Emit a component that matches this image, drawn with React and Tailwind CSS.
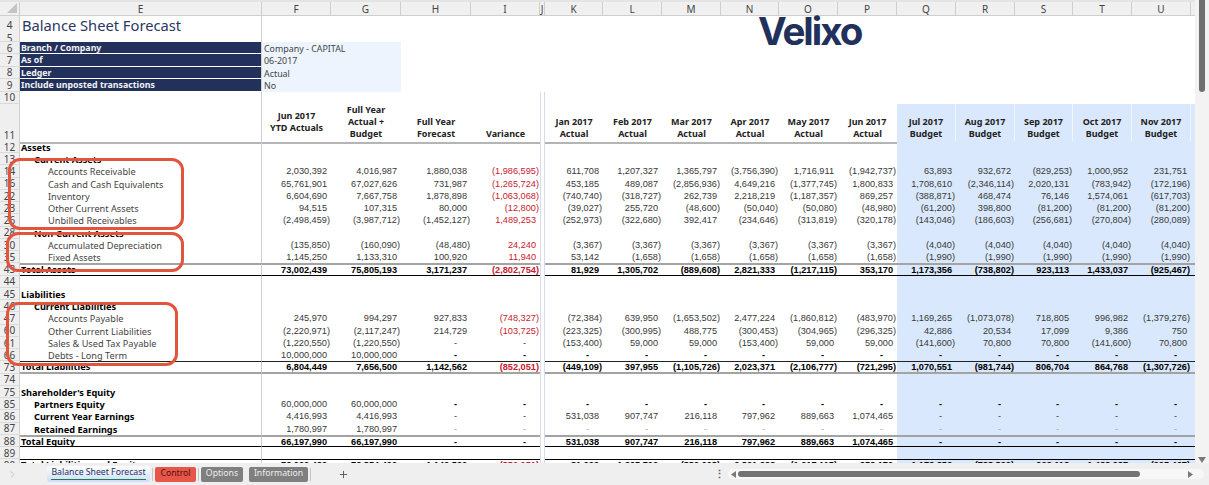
import React from 'react';
import { ChevronRight, Plus } from 'lucide-react';

const GRID =
  'grid grid-cols-[20px_242px_69px_70px_70px_69px_5px_58px_59px_59px_58px_59px_59px_59px_59px_58px_59px_59px_4px]';
const LABEL_FONT = "font-['Noto_Sans',sans-serif]";
const NUM_FONT = "font-['Liberation_Sans',sans-serif]";

const LETTERS = ['F', 'G', 'H', 'I', 'J', 'K', 'L', 'M', 'N', 'O', 'P', 'Q', 'R', 'S', 'T', 'U'];

const dashes = (n) => Array(n).fill('-');

const rows = [
  { n: 12, label: 'Assets', bold: true },
  { n: 13, label: 'Current Assets', bold: true, level: 1 },
  { n: 14, label: 'Accounts Receivable', level: 2, v: ['2,030,392', '4,016,987', '1,880,038', '(1,986,595)', '611,708', '1,207,327', '1,365,797', '(3,756,390)', '1,716,911', '(1,942,737)', '63,893', '932,672', '(829,253)', '1,000,952', '231,751'] },
  { n: 16, label: 'Cash and Cash Equivalents', level: 2, v: ['65,761,901', '67,027,626', '731,987', '(1,265,724)', '453,185', '489,087', '(2,856,936)', '4,649,216', '(1,377,745)', '1,800,833', '1,708,610', '(2,346,114)', '2,020,131', '(783,942)', '(172,196)'] },
  { n: 22, label: 'Inventory', level: 2, v: ['6,604,690', '7,667,758', '1,878,898', '(1,063,068)', '(740,740)', '(318,727)', '262,739', '2,218,219', '(1,187,357)', '869,257', '(388,871)', '468,474', '76,146', '1,574,061', '(617,703)'] },
  { n: 23, label: 'Other Current Assets', level: 2, v: ['94,515', '107,315', '80,000', '(12,800)', '(39,027)', '255,720', '(48,600)', '(50,040)', '(50,080)', '(48,980)', '(61,200)', '398,800', '(81,200)', '(81,200)', '(81,200)'] },
  { n: 26, label: 'Unbilled Receivables', level: 2, v: ['(2,498,459)', '(3,987,712)', '(1,452,127)', '1,489,253', '(252,973)', '(322,680)', '392,417', '(234,646)', '(313,819)', '(320,178)', '(143,046)', '(186,603)', '(256,681)', '(270,804)', '(280,089)'] },
  { n: 28, label: 'Non-Current Assets', bold: true, level: 1 },
  { n: 30, label: 'Accumulated Depreciation', level: 2, v: ['(135,850)', '(160,090)', '(48,480)', '24,240', ...Array(6).fill('(3,367)'), ...Array(5).fill('(4,040)')] },
  { n: 35, label: 'Fixed Assets', level: 2, v: ['1,145,250', '1,133,310', '100,920', '11,940', '53,142', ...Array(5).fill('(1,658)'), ...Array(5).fill('(1,990)')] },
  { n: 43, label: 'Total Assets', bold: true, boldNums: true, line: 'grayblack', v: ['73,002,439', '75,805,193', '3,171,237', '(2,802,754)', '81,929', '1,305,702', '(889,608)', '2,821,333', '(1,217,115)', '353,170', '1,173,356', '(738,802)', '923,113', '1,433,037', '(925,467)'] },
  { n: 44 },
  { n: 45, label: 'Liabilities', bold: true },
  { n: 46, label: 'Current Liabilities', bold: true, level: 1 },
  { n: 47, label: 'Accounts Payable', level: 2, v: ['245,970', '994,297', '927,833', '(748,327)', '(72,384)', '639,950', '(1,653,502)', '2,477,224', '(1,860,812)', '(483,970)', '1,169,265', '(1,073,078)', '718,805', '996,982', '(1,379,276)'] },
  { n: 60, label: 'Other Current Liabilities', level: 2, v: ['(2,220,971)', '(2,117,247)', '214,729', '(103,725)', '(223,325)', '(300,995)', '488,775', '(300,453)', '(304,965)', '(296,325)', '42,886', '20,534', '17,099', '9,386', '750'] },
  { n: 61, label: 'Sales & Used Tax Payable', level: 2, v: ['(1,220,550)', '(1,220,550)', '-', '-', '(153,400)', '59,000', '59,000', '(153,400)', '59,000', '59,000', '(141,600)', '70,800', '70,800', '(141,600)', '70,800'] },
  { n: 66, label: 'Debts - Long Term', level: 2, dash: 'text-black font-bold', v: ['10,000,000', '10,000,000', ...dashes(13)] },
  { n: 73, label: 'Total Liabilities', bold: true, boldNums: true, line: 'blackgray', v: ['6,804,449', '7,656,500', '1,142,562', '(852,051)', '(449,109)', '397,955', '(1,105,726)', '2,023,371', '(2,106,777)', '(721,295)', '1,070,551', '(981,744)', '806,704', '864,768', '(1,307,726)'] },
  { n: 74 },
  { n: 75, label: "Shareholder's Equity", bold: true },
  { n: 85, label: 'Partners Equity', bold: true, level: 1, dash: 'text-black font-bold', v: ['60,000,000', '60,000,000', ...dashes(13)] },
  { n: 86, label: 'Current Year Earnings', bold: true, level: 1, v: ['4,416,993', '4,416,993', '-', '-', '531,038', '907,747', '216,118', '797,962', '889,663', '1,074,465', ...dashes(5)] },
  { n: 87, label: 'Retained Earnings', bold: true, level: 1, dash: 'text-[#a8a8a8]', v: ['1,780,997', '1,780,997', ...dashes(13)] },
  { n: 88, label: 'Total Equity', bold: true, boldNums: true, line: 'grayblack', v: ['66,197,990', '66,197,990', '-', '-', '531,038', '907,747', '216,118', '797,962', '889,663', '1,074,465', ...dashes(5)] },
  { n: 89 },
  { n: 90, label: 'Total Liabilities and Equity', bold: true, boldNums: true, line: 'blacktop', v: ['73,002,439', '73,854,490', '1,142,562', '(852,051)', '81,929', '1,305,702', '(889,608)', '2,821,333', '(1,217,115)', '353,170', '1,173,356', '(738,802)', '923,113', '1,433,037', '(925,467)'] },
];

const lineClass = {
  grayblack: 'border-t-2 border-t-[#a3a3a3] border-b border-b-black',
  blackgray: 'border-t border-t-[#222] border-b-2 border-b-[#a3a3a3]',
  blacktop: 'border-t border-t-black',
};

const months = [
  ['Jan 2017', 'Actual'], ['Feb 2017', 'Actual'], ['Mar 2017', 'Actual'],
  ['Apr 2017', 'Actual'], ['May 2017', 'Actual'], ['Jun 2017', 'Actual'],
];
const budget = [
  ['Jul 2017', 'Budget'], ['Aug 2017', 'Budget'], ['Sep 2017', 'Budget'],
  ['Oct 2017', 'Budget'], ['Nov 2017', 'Budget'],
];

const RowNum = ({ n }) => (
  <div className={`flex items-center justify-center overflow-hidden bg-[#efefef] border-r border-r-[#cfcfcf] border-b border-b-[#dadada] pt-px text-[10px] text-[#444] ${LABEL_FONT}`}>
    {n}
  </div>
);

const NumCell = ({ value, bold, red, blue, line, dash }) => {
  const neg = value && value.startsWith('(');
  const isDash = value === '-';
  const pad = isDash ? 'pr-[14px]' : neg ? 'pr-px' : 'pr-[4px]';
  let color = red ? 'text-[#c8202f]' : bold ? 'text-black' : 'text-[#383838]';
  if (isDash && dash) color = dash;
  return (
    <div className={`overflow-hidden whitespace-nowrap text-right text-[9.2px] ${line ? 'leading-[11px]' : 'leading-[13px]'} ${NUM_FONT} ${pad} ${color} ${bold ? 'font-bold' : ''} ${blue ? 'bg-[#d9e8fc]' : ''} ${line || ''}`}>
      {value}
    </div>
  );
};

const ColJ = () => <div className="border-x border-x-[#d5dcf0]" />;

const SheetRow = ({ row }) => {
  const line = lineClass[row.line] || '';
  const pad = row.level === 2 ? 'pl-[28px]' : row.level === 1 ? 'pl-[14px]' : 'pl-px';
  const vals = row.v || Array(15).fill('');
  const common = { bold: row.boldNums, dash: row.dash, line };
  return (
    <div className={`${GRID} h-[12.25px]`}>
      <RowNum n={row.n} />
      <div className={`overflow-hidden whitespace-nowrap border-r border-r-[#cfcfcf] text-[9.2px] ${line ? 'leading-[10px]' : 'leading-[13px]'} ${LABEL_FONT} ${pad} ${row.bold ? 'font-bold text-black' : 'text-[#444]'} ${line}`}>
        {row.label}
      </div>
      {vals.slice(0, 4).map((v, i) => (
        <NumCell key={i} value={v} red={i === 3 && v !== '-'} {...common} />
      ))}
      <ColJ />
      {vals.slice(4, 10).map((v, i) => (
        <NumCell key={i} value={v} {...common} />
      ))}
      {vals.slice(10).map((v, i) => (
        <NumCell key={i} value={v} blue {...common} />
      ))}
      <div className={`bg-[#d9e8fc] ${line}`} />
    </div>
  );
};

const HeadCell = ({ lines, blue, raised }) => (
  <div className={`flex flex-col items-center justify-end border-b-2 border-b-[#b5b5b5] text-[9px] font-bold leading-[12.2px] text-[#222] ${LABEL_FONT} ${raised ? 'pb-[7px]' : 'pb-px'} ${blue ? 'bg-[#d9e8fc] border-r border-r-[#f2f7fe]' : ''}`}>
    {lines.map((l) => (
      <span key={l} className="whitespace-nowrap">{l}</span>
    ))}
  </div>
);

const InfoRow = ({ n, label, value }) => (
  <div className={`${GRID} h-[12.4px]`}>
    <RowNum n={n} />
    <div className={`overflow-hidden whitespace-nowrap border-b border-b-white border-r border-r-[#cfcfcf] bg-[#22305c] pl-px text-[8.8px] font-bold leading-[13px] text-[#f2f2f2] ${LABEL_FONT}`}>
      {label}
    </div>
    <div className={`col-span-2 overflow-hidden whitespace-nowrap bg-[#edf4fd] pl-[2px] text-[8.9px] leading-[13px] text-[#444] ${LABEL_FONT}`}>
      {value}
    </div>
  </div>
);

const RedBox = ({ className }) => (
  <div className={`absolute rounded-[12px] border-[3.5px] border-[#e2553d] ${className}`} />
);

const SheetTab = ({ children, className }) => (
  <div className={`flex h-[15px] items-center justify-center whitespace-nowrap rounded-[2px] text-[8.7px] ${LABEL_FONT} ${className}`}>
    {children}
  </div>
);

const Sep = () => <div className="mx-[2px] h-[13px] w-px bg-[#c6c6c6]" />;

export default function App() {
  return (
    <div className="flex h-[485px] w-[1209px] flex-col overflow-hidden bg-white">
      <div className="flex h-[463px]">
        {/* Sheet */}
        <div className="relative w-[1195px] overflow-hidden">
          {/* Column letters */}
          <div className={`${GRID} h-[16px] border-t-2 border-t-[#e4e4e4] border-b border-b-[#cfcfcf] bg-[#f0f0f0]`}>
            <div className="flex items-end justify-end border-r border-r-[#cfcfcf] pr-[2px] pb-[2px]">
              <svg width="10" height="10" viewBox="0 0 10 10"><polygon points="10,0 10,10 0,10" fill="#c4c4c4" /></svg>
            </div>
            {['E', ...LETTERS].map((l) => (
              <div key={l} className={`flex items-center justify-center border-r border-r-[#cfcfcf] text-[10px] leading-none text-[#444] ${LABEL_FONT}`}>
                {l}
              </div>
            ))}
          </div>

          {/* Title rows */}
          <div className={`${GRID} h-[18px]`}>
            <RowNum n={4} />
            <div className={`whitespace-nowrap border-r border-r-[#cfcfcf] pl-[2px] text-[14.7px] leading-[19px] text-[#2b3762] ${LABEL_FONT}`}>
              Balance Sheet Forecast
            </div>
          </div>
          <div className={`${GRID} h-[8px]`}>
            <RowNum n={5} />
            <div className="border-r border-r-[#cfcfcf]" />
          </div>
          <InfoRow n={6} label="Branch / Company" value="Company - CAPITAL" />
          <InfoRow n={7} label="As of" value="06-2017" />
          <InfoRow n={8} label="Ledger" value="Actual" />
          <InfoRow n={9} label="Include unposted transactions" value="No" />
          <div className={`${GRID} h-[12.4px]`}>
            <RowNum n={10} />
            <div className="border-r border-r-[#cfcfcf]" />
            <div className="col-span-4" />
            <ColJ />
          </div>

          {/* Column titles */}
          <div className={`${GRID} h-[37px]`}>
            <div className={`flex items-end justify-center border-r border-r-[#cfcfcf] border-b-2 border-b-[#b5b5b5] bg-[#efefef] pb-px text-[10px] leading-[12px] text-[#444] ${LABEL_FONT}`}>11</div>
            <div className="border-r border-r-[#cfcfcf] border-b-2 border-b-[#b5b5b5]" />
            <HeadCell lines={['Jun 2017', 'YTD Actuals']} raised />
            <HeadCell lines={['Full Year', 'Actual +', 'Budget']} />
            <HeadCell lines={['Full Year', 'Forecast']} />
            <HeadCell lines={['Variance']} />
            <ColJ />
            {months.map((m) => <HeadCell key={m[0]} lines={m} />)}
            {budget.map((m) => <HeadCell key={m[0]} lines={m} blue />)}
            <div className="border-b-2 border-b-[#b5b5b5] bg-[#d9e8fc]" />
          </div>

          {rows.map((r) => <SheetRow key={r.n} row={r} />)}

          {/* Floating logo and callouts */}
          <div className="absolute left-[758px] top-[11px] font-['Inter',sans-serif] text-[38.5px] font-bold leading-[40px] tracking-[-2px] text-[#22305c]">
            Velixo
          </div>
          <RedBox className="left-[8px] top-[158px] h-[72px] w-[176px]" />
          <RedBox className="left-[6px] top-[232px] h-[40px] w-[178px]" />
          <RedBox className="left-[6px] top-[302px] h-[64px] w-[172px]" />
        </div>

        {/* Vertical scrollbar */}
        <div className="relative w-[14px] bg-[#f3f3f3]">
          <div className="ml-[4px] h-[92px] w-[6px] rounded-b-[3px] bg-[#6f6f6f]" />
          <svg className="absolute bottom-0 left-[3px]" width="8" height="6" viewBox="0 0 8 6"><polygon points="0,0 8,0 4,6" fill="#7a7a7a" /></svg>
        </div>
      </div>

      {/* Tab bar */}
      <div className="flex h-[22px] items-center bg-[#efefef]">
        <ChevronRight size={11} className="ml-[7px] mr-[29px] text-[#bdbdbd]" />
        <div className={`relative flex h-[16px] w-[103px] items-start justify-center whitespace-nowrap rounded-[3px] bg-gradient-to-b from-white to-[#cddcfb] text-[8.7px] leading-[13px] text-[#26325c] ${LABEL_FONT}`}>
          Balance Sheet Forecast
          <div className="absolute bottom-[2px] left-[4px] right-[4px] h-px bg-[#1f7a4d]" />
        </div>
        <Sep />
        <SheetTab className="w-[41px] bg-[#e8564a] text-[#4a1410]">Control</SheetTab>
        <Sep />
        <SheetTab className="w-[42px] bg-[#7f7f7f] text-[#ededed]">Options</SheetTab>
        <div className="w-[6px]" />
        <SheetTab className="w-[59px] bg-[#7f7f7f] text-[#ededed]">Information</SheetTab>
        <Sep />
        <Plus size={11} className="ml-[25px] text-[#555]" />
        <div className={`ml-[365px] w-[6px] text-center text-[11px] font-bold leading-none text-[#666] ${NUM_FONT}`}>⋮</div>
        <div className="ml-[8px] flex h-[10px] w-[476px] items-center rounded-[5px] bg-[#f7f7f7] pl-[3px]">
          <svg width="5" height="7" viewBox="0 0 5 7"><polygon points="5,0 5,7 0,3.5" fill="#7a7a7a" /></svg>
          <div className="ml-[2px] h-[6px] w-[402px] rounded-[3px] bg-[#737373]" />
          <svg className="ml-[48px]" width="5" height="7" viewBox="0 0 5 7"><polygon points="0,0 0,7 5,3.5" fill="#7a7a7a" /></svg>
        </div>
      </div>
    </div>
  );
}
